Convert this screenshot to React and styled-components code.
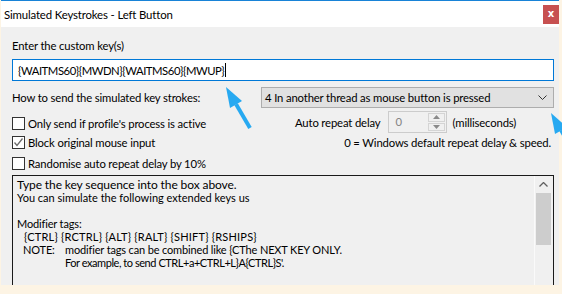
import { styled, createGlobalStyle } from "styled-components";

const GlobalStyle = createGlobalStyle`
  body {
    margin: 0;
    background: #fdf4e4;
    font-family: Lato, "Noto Sans", sans-serif;
    font-size: 11.3px;
    letter-spacing: -0.15px;
    color: #000;
  }
`;

const Page = styled.div`
  position: relative;
  width: 562px;
  height: 294px;
  overflow: hidden;
  padding-left: 1px;
  box-sizing: border-box;
`;

const Window = styled.div`
  width: 558px;
  height: 285px;
  display: flex;
  flex-direction: column;
  background: #f0f0f0;
  overflow: hidden;
`;

const TitleBar = styled.div`
  height: 27px;
  flex-shrink: 0;
  box-sizing: border-box;
  background: #fff;
  border-top: 1px solid #1883d7;
  display: flex;
  justify-content: space-between;
  align-items: flex-start;
`;

const Title = styled.div`
  padding: 6px 0 0 3px;
  line-height: 15px;
  font-size: 11.4px;
`;

const CloseButton = styled.div`
  width: 16px;
  height: 19px;
  margin-top: 4px;
  background: #c75050;
  color: #fff;
  font-family: "DejaVu Sans", sans-serif;
  font-weight: bold;
  font-size: 10px;
  line-height: 18px;
  text-align: center;
`;

const Body = styled.div`
  flex: 1;
  min-height: 0;
  padding: 11px 5px 0 11px;
  display: flex;
  flex-direction: column;
  & > * {
    flex-shrink: 0;
  }
`;

const FieldLabel = styled.div`
  line-height: 15px;
`;

const KeyInput = styled.div`
  margin-top: 6px;
  height: 22px;
  box-sizing: border-box;
  border: 1px solid #0078d7;
  background: #fff;
  padding-left: 5px;
  letter-spacing: -0.45px;
  display: flex;
  align-items: center;
`;

const Caret = styled.span`
  width: 1px;
  height: 14px;
  margin-left: 1px;
  background: #000;
`;

const SendRow = styled.div`
  margin-top: 6px;
  height: 21px;
  display: flex;
  align-items: center;
  justify-content: space-between;
`;

const Select = styled.div`
  width: 293px;
  height: 21px;
  box-sizing: border-box;
  background: #e1e1e1;
  border: 1px solid #adadad;
  padding: 0 6px 0 3px;
  display: flex;
  align-items: center;
  justify-content: space-between;
`;

const Options = styled.div`
  display: flex;
`;

const CheckList = styled.div`
  padding-top: 9px;
  display: flex;
  flex-direction: column;
`;

const CheckRow = styled.label`
  display: flex;
  align-items: center;
  height: 13px;
  margin-top: ${(p) => p.$gap || 0}px;
`;

const Box = styled.span`
  width: 13px;
  height: 13px;
  box-sizing: border-box;
  border: 1px solid #333;
  background: #fff;
  margin-right: 3px;
  display: flex;
  align-items: center;
  justify-content: center;
`;

const RightColumn = styled.div`
  margin-left: auto;
  width: 259px;
  padding-top: 3px;
  display: flex;
  flex-direction: column;
`;

const SpinRow = styled.div`
  display: flex;
  align-items: center;
  height: 22px;
`;

const SpinBox = styled.div`
  width: 59px;
  height: 22px;
  box-sizing: border-box;
  margin: 0 5px 0 8px;
  border: 1px solid #cccccc;
  display: flex;
  align-items: stretch;
`;

const SpinValue = styled.span`
  flex: 1;
  color: #838383;
  padding-left: 6px;
  line-height: 20px;
`;

const SpinButtons = styled.div`
  width: 17px;
  margin: 1px 1px 1px 0;
  display: flex;
  flex-direction: column;
  gap: 1px;
`;

const SpinButton = styled.div`
  flex: 1;
  border: 1px solid #d4d4d4;
  background: #f0f0f0;
  display: flex;
  align-items: center;
  justify-content: center;
`;

const InfoLine = styled.div`
  margin-top: 3px;
  padding-right: 3px;
  line-height: 14px;
  text-align: right;
`;

const TextArea = styled.div`
  margin-top: 5px;
  flex: 1 0 auto;
  border: 1px solid #1a1a1a;
  border-bottom: none;
  display: flex;
`;

const TextContent = styled.div`
  flex: 1;
  padding: 2px 0 0 4px;
`;

const Line = styled.div`
  height: 13px;
  line-height: 13px;
  font-size: ${(p) => p.$size || 11}px;
  letter-spacing: ${(p) => p.$spacing ?? -0.15}px;
  padding-left: ${(p) => p.$indent || 0}px;
  white-space: pre;
`;

const Tag = styled.span`
  display: inline-block;
  width: 42px;
`;

const Scrollbar = styled.div`
  width: 17px;
  margin-right: 1px;
  border-left: 1px solid #fafafa;
  background: #f0f0f0;
  display: flex;
  flex-direction: column;
  align-items: center;
`;

const ScrollArrow = styled.div`
  height: 17px;
  display: flex;
  align-items: center;
  justify-content: center;
`;

const Thumb = styled.div`
  width: 15px;
  height: 52px;
  background: #cdcdcd;
`;

const Pointers = styled.svg`
  position: absolute;
  left: 0;
  top: 0;
  pointer-events: none;
`;

const Arrow = ({ dx = 0, dy = 0 }) => (
  <g transform={`translate(${dx} ${dy})`} fill="#27a9f1">
    <polygon points="226,87 242,101 230,108" />
    <polygon points="237.8,103.3 234.4,105.3 248.3,129 251.7,127" />
  </g>
);

const App = () => {
  return (
    <Page>
      <GlobalStyle />
      <Window>
        <TitleBar>
          <Title>Simulated Keystrokes - Left Button</Title>
          <CloseButton>x</CloseButton>
        </TitleBar>
        <Body>
          <FieldLabel>Enter the custom key(s)</FieldLabel>
          <KeyInput>
            {"{WAITMS60}{MWDN}{WAITMS60}{MWUP}"}
            <Caret />
          </KeyInput>
          <SendRow>
            <span>How to send the simulated key strokes:</span>
            <Select>
              <span>4 In another thread as mouse button is pressed</span>
              <svg width="9" height="5" viewBox="0 0 9 5">
                <path d="M0.5 0.5 L4.5 4.5 L8.5 0.5" fill="none" stroke="#333" />
              </svg>
            </Select>
          </SendRow>
          <Options>
            <CheckList>
              <CheckRow>
                <Box />
                Only send if profile's process is active
              </CheckRow>
              <CheckRow $gap={6}>
                <Box>
                  <svg width="11" height="11" viewBox="0 0 11 11">
                    <path d="M1.5 5.5 L4 8.5 L9.5 1.5" fill="none" stroke="#6b6b6b" strokeWidth="1.3" />
                  </svg>
                </Box>
                Block original mouse input
              </CheckRow>
              <CheckRow $gap={8}>
                <Box />
                Randomise auto repeat delay by 10%
              </CheckRow>
            </CheckList>
            <RightColumn>
              <SpinRow>
                <span>Auto repeat delay</span>
                <SpinBox>
                  <SpinValue>0</SpinValue>
                  <SpinButtons>
                    <SpinButton>
                      <svg width="7" height="4" viewBox="0 0 7 4">
                        <polygon points="0,4 3.5,0 7,4" fill="#8a8a8a" />
                      </svg>
                    </SpinButton>
                    <SpinButton>
                      <svg width="7" height="4" viewBox="0 0 7 4">
                        <polygon points="0,0 3.5,4 7,0" fill="#8a8a8a" />
                      </svg>
                    </SpinButton>
                  </SpinButtons>
                </SpinBox>
                <span>(milliseconds)</span>
              </SpinRow>
              <InfoLine>0 = Windows default repeat delay &amp; speed.</InfoLine>
            </RightColumn>
          </Options>
          <TextArea>
            <TextContent>
              <Line $size={12} $spacing={-0.1}>Type the key sequence into the box above.</Line>
              <Line $spacing={0}>You can simulate the following extended keys us</Line>
              <Line />
              <Line>Modifier tags:</Line>
              <Line $indent={7} $spacing={0.2}>{"{CTRL} {RCTRL} {ALT} {RALT} {SHIFT} {RSHIPS}"}</Line>
              <Line $indent={6}>
                <Tag>NOTE:</Tag>
                {"modifier tags can be combined like {CThe NEXT KEY ONLY."}
              </Line>
              <Line $indent={48} $spacing={-0.45}>{"For example, to send CTRL+a+CTRL+L}A{CTRL}S'."}</Line>
            </TextContent>
            <Scrollbar>
              <ScrollArrow>
                <svg width="9" height="5" viewBox="0 0 9 5">
                  <path d="M0.5 4.5 L4.5 0.5 L8.5 4.5" fill="none" stroke="#606060" strokeWidth="1.3" />
                </svg>
              </ScrollArrow>
              <Thumb />
            </Scrollbar>
          </TextArea>
        </Body>
      </Window>
      <Pointers width="562" height="294">
        <Arrow />
        <Arrow dx={325} dy={26} />
      </Pointers>
    </Page>
  );
};

export default App;
